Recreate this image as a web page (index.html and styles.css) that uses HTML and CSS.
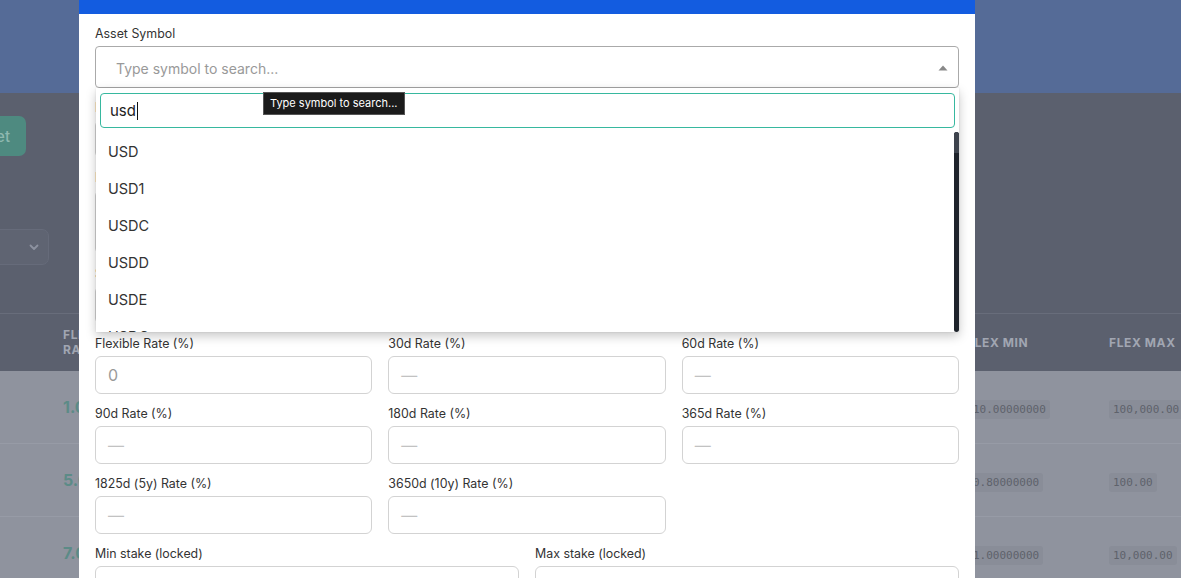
FILE: index.html
```html
<!DOCTYPE html>
<html lang="en">
<head>
<meta charset="utf-8">
<title>Earn Assets</title>
<link rel="stylesheet" href="styles.css">
</head>
<body>
<div class="page">
  <header class="topbar"></header>
  <main class="content">
    <div class="toolbar">
      <button class="btn-add">Add Asset</button>
    </div>
    <div class="filters">
      <div class="filter-select">
        <span>All statuses</span>
        <svg width="12" height="12" viewBox="0 0 12 12"><path d="M2.5 4.5 6 8l3.5-3.5" fill="none" stroke="#8d92a0" stroke-width="1.8" stroke-linecap="round" stroke-linejoin="round"/></svg>
      </div>
    </div>
    <table class="assets">
      <thead>
        <tr>
          <th class="c-rate">Flexible Rate</th>
          <th class="c-mid">30d Rate</th>
          <th class="c-min">Flex Min</th>
          <th class="c-max">Flex Max</th>
        </tr>
      </thead>
      <tbody>
        <tr>
          <td class="c-rate"><span class="rate">1.00%</span></td>
          <td class="c-mid"></td>
          <td class="c-min"><code>10.00000000</code></td>
          <td class="c-max"><code>100,000.00</code></td>
        </tr>
        <tr>
          <td class="c-rate"><span class="rate">5.00%</span></td>
          <td class="c-mid"></td>
          <td class="c-min"><code>0.80000000</code></td>
          <td class="c-max"><code>100.00</code></td>
        </tr>
        <tr>
          <td class="c-rate"><span class="rate">7.00%</span></td>
          <td class="c-mid"></td>
          <td class="c-min"><code>1.00000000</code></td>
          <td class="c-max"><code>10,000.00</code></td>
        </tr>
      </tbody>
    </table>
  </main>
</div>

<div class="modal">
  <div class="modal-header"><h2>Add Earn Asset</h2></div>
  <div class="modal-body">
    <div class="field asset-field">
      <label>Asset Symbol</label>
      <div class="combo">
        <span class="combo-placeholder">Type symbol to search...</span>
        <svg class="combo-arrow" width="10" height="6" viewBox="0 0 10 6"><path d="M0.5 5.5 5 0.5l4.5 5z" fill="#888"/></svg>
      </div>
      <div class="dropdown">
        <div class="dd-search"><span class="dd-text">usd</span><span class="caret"></span></div>
        <ul class="dd-list">
          <li>USD</li>
          <li>USD1</li>
          <li>USDC</li>
          <li>USDD</li>
          <li>USDE</li>
          <li>USDG</li>
          <li>USDP</li>
          <li>USDT</li>
        </ul>
        <div class="dd-scroll"><div class="dd-thumb"></div></div>
      </div>
      <div class="tooltip">Type symbol to search...</div>
    </div>

    <div class="grid-2">
      <div class="field"><label>Display Name</label><div class="input"></div></div>
      <div class="field"><label>Network</label><div class="input"></div></div>
    </div>
    <div class="field"><label>Description</label><div class="input textarea"></div></div>
    <div class="grid-2">
      <div class="field"><label>Status</label><div class="input"></div></div>
      <div class="field"><label>Sort Order</label><div class="input"></div></div>
    </div>

    <div class="grid-3">
      <div class="field"><label>Flexible Rate (%)</label><div class="input"><span class="ph">0</span></div></div>
      <div class="field"><label>30d Rate (%)</label><div class="input"><span class="ph dash">—</span></div></div>
      <div class="field"><label>60d Rate (%)</label><div class="input"><span class="ph dash">—</span></div></div>
      <div class="field"><label>90d Rate (%)</label><div class="input"><span class="ph dash">—</span></div></div>
      <div class="field"><label>180d Rate (%)</label><div class="input"><span class="ph dash">—</span></div></div>
      <div class="field"><label>365d Rate (%)</label><div class="input"><span class="ph dash">—</span></div></div>
      <div class="field"><label>1825d (5y) Rate (%)</label><div class="input"><span class="ph dash">—</span></div></div>
      <div class="field"><label>3650d (10y) Rate (%)</label><div class="input"><span class="ph dash">—</span></div></div>
    </div>
    <div class="grid-2">
      <div class="field"><label>Min stake (locked)</label><div class="input"></div></div>
      <div class="field"><label>Max stake (locked)</label><div class="input"></div></div>
    </div>
  </div>
</div>
</body>
</html>
```

FILE: styles.css
```css
* { box-sizing: border-box; }
html, body { margin: 0; padding: 0; }
body {
  width: 1181px;
  height: 578px;
  overflow: hidden;
  background: #5b606e;
  font-family: Inter, "Noto Sans", sans-serif;
  position: relative;
}

.page { width: 1181px; }
.topbar { height: 93px; background: #556b97; }

.content { padding-top: 23px; }
.toolbar { height: 40px; margin-left: -80px; display: flex; }
.btn-add {
  width: 106px; height: 40px;
  border: 0; border-radius: 7px;
  background: #4e8a80; color: #8fb9b0;
  font: 500 15px Inter, sans-serif;
  padding: 0 16px; text-align: right;
  white-space: nowrap;
}
.filters { margin-top: 73px; height: 36px; display: flex; margin-left: -120px; }
.filter-select {
  width: 169px; height: 36px;
  border: 1px solid #666b7a; border-radius: 7px;
  background: #5f6472;
  display: flex; align-items: center; justify-content: space-between;
  padding: 0 8px 0 12px;
  color: #8d92a0; font-size: 14px;
}

.assets {
  margin-top: 48px;
  width: 1181px;
  border-collapse: collapse;
  table-layout: fixed;
  border-top: 1px solid #686d7b;
}
.assets th, .assets td { padding: 0; text-align: left; vertical-align: middle; }
.assets th {
  height: 57px;
  font-size: 12px; font-weight: 700; text-transform: uppercase;
  letter-spacing: 0.6px; line-height: 15px;
  color: #a1a6b2;
  background: #5b606e;
}
.assets td { height: 73px; background: #8f939e; border-bottom: 1px solid #979ba6; }
.c-rate { width: 111px; }
.assets th.c-rate, .assets td.c-rate { padding-left: 63px; }
.c-mid { width: 856px; }
.c-min { width: 142px; }
.c-max { width: 72px; }
.assets td.c-min { padding-left: 2px; }
.rate { color: #5c8b87; font-weight: 700; font-size: 16px; }
code {
  font-family: "DejaVu Sans Mono", monospace;
  font-size: 11px;
  color: #5e626b;
  background: #898d98;
  padding: 3px 4px;
  border-radius: 3px;
  white-space: nowrap;
}

/* modal */
.modal {
  position: absolute;
  left: 79px; top: -36px;
  width: 896px;
  background: #fff;
}
.modal-header { height: 50px; background: #135ce0; display: flex; align-items: center; padding: 0 24px; }
.modal-header h2 { margin: 0; margin-top: 6px; color: #fff; font-size: 18px; font-weight: 600; }
.modal-body { padding: 10px 16px 16px; }

.field { display: flex; flex-direction: column; margin-bottom: 10px; }
.field label { font-size: 12.4px; line-height: 18px; color: #333; padding-top: 1px; margin-bottom: 3px; }
.input {
  height: 38px;
  border: 1px solid #d3d3d3; border-radius: 6px;
  display: flex; align-items: center; padding: 0 12px;
}
.textarea { height: 64px; }
.ph { font-size: 16px; color: #9a9a9a; }
.ph.dash { color: #c2c2c2; }

.grid-2 { display: grid; grid-template-columns: 1fr 1fr; column-gap: 16px; }
.grid-3 { display: grid; grid-template-columns: repeat(3, 1fr); column-gap: 16px; }

.asset-field { position: relative; }
.combo {
  height: 42px;
  border: 1px solid #aaa; border-radius: 4px;
  display: flex; align-items: center; justify-content: space-between;
  padding: 3px 10px 0 20px;
}
.combo-placeholder { font-size: 14px; color: #999; }
.combo-arrow { margin-top: -2px; }

.dropdown {
  position: absolute;
  left: 1px; right: 0; top: 64px;
  height: 244px;
  background: #fff;
  box-shadow: 0 4px 10px rgba(0,0,0,0.22), 0 0 2px rgba(0,0,0,0.1);
  z-index: 5;
  overflow: hidden;
}
.dd-search {
  margin: 5px 4px 4px;
  height: 35px;
  border: 1px solid #37b89f; border-radius: 4px;
  display: flex; align-items: center;
  padding: 0 9px;
  font-size: 15px; color: #222;
}
.caret { width: 1px; height: 18px; background: #111; margin-left: 1px; }
.dd-list { list-style: none; margin: 0; padding: 0; }
.dd-list li { height: 37px; line-height: 39px; padding: 0 12px; font-size: 14.5px; color: #333; }
.dd-scroll {
  position: absolute; right: 0; top: 44px;
  width: 5px; height: 200px;
  background: #1e232b; border-radius: 3px;
}
.dd-thumb { height: 21px; background: #3d434d; border-radius: 3px 3px 0 0; }

.tooltip {
  position: absolute;
  left: 168px; top: 68px;
  height: 23px;
  padding: 0 6px;
  background: #1b1b1b;
  border: 1px solid #555;
  color: #fff;
  font-size: 11px; line-height: 21px;
  z-index: 6;
  white-space: nowrap;
}
```
